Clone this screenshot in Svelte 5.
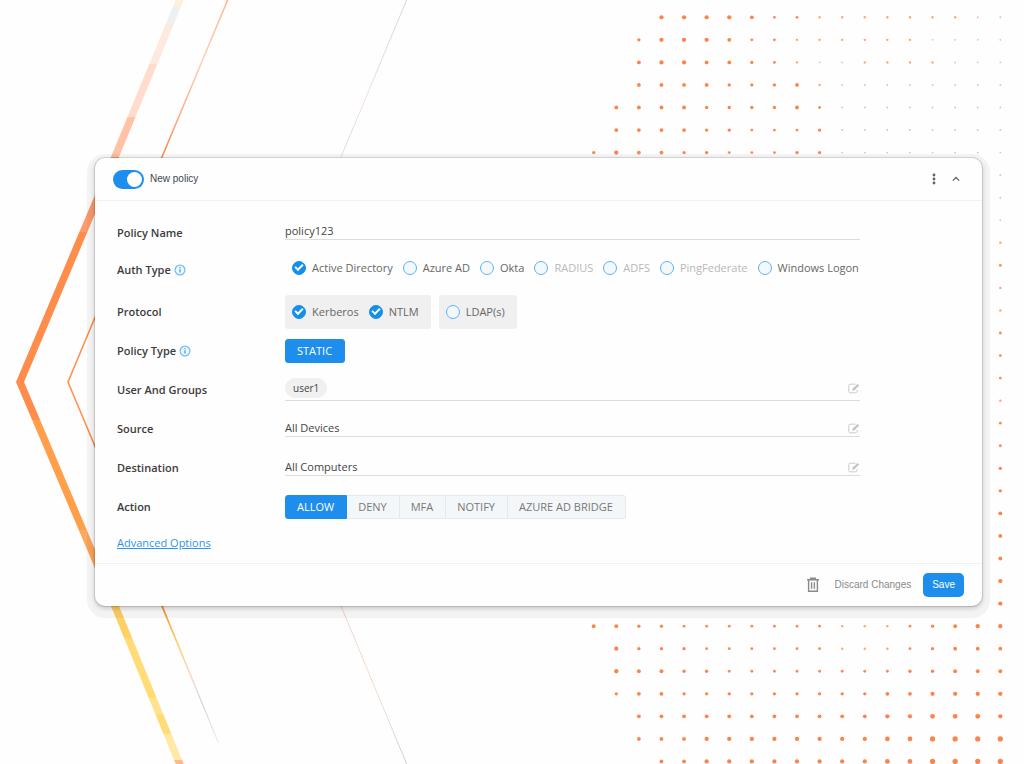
<script lang="ts">
  // One digit per dot, 0 = no dot, 8 = largest
  const topRows = [
    "0006666533222222211",
    "0046665332222221111",
    "0056655432112222111",
    "0055554445211111111",
    "0555544445311111111",
    "0555544333411111111",
    "4655443334411111111",
  ];
  const edgeColumn = "11123223332334455566";
  const bottomRows = [
    "5544333333322234566",
    "0644433333322234555",
    "0655443333333344555",
    "0455444444444556666",
    "0055555555555667776",
    "0055566666666778888",
    "0005566666666778888",
  ];

  const rows = [
    ...topRows,
    ...[...edgeColumn].map((size) => "0".repeat(18) + size),
    ...bottomRows,
  ];

  const dots = rows.flatMap((row, y) =>
    [...row]
      .map((size, x) => ({
        x: 593.7 + x * 22.59,
        y: 17.3 + y * 22.55,
        size: Number(size),
      }))
      .filter((dot) => dot.size > 0),
  );

  const bands = [
    [0, 7, "#ffefdc"],
    [7, 24, "#edeff0"],
    [24, 64, "#fee9de"],
    [64, 117, "#ffdccb"],
    [117, 157, "#ffc2a4"],
    [157, 232, "#ff9c6c"],
    [232, 420, "#ff8c4b"],
    [420, 530, "#ff9f4a"],
    [530, 606, "#ffa75c"],
    [606, 638, "#ffd063"],
    [638, 698, "#ffdc76"],
    [698, 714, "#ffe391"],
    [714, 734, "#ffdc76"],
    [734, 760, "#ffe9a6"],
    [760, 764, "#ffb98d"],
  ] as const;

  let enabled = $state(true);
  let name = $state("policy123");

  let authTypes = $state([
    { label: "Active Directory", checked: true, disabled: false },
    { label: "Azure AD", checked: false, disabled: false },
    { label: "Okta", checked: false, disabled: false },
    { label: "RADIUS", checked: false, disabled: true },
    { label: "ADFS", checked: false, disabled: true },
    { label: "PingFederate", checked: false, disabled: true },
    { label: "Windows Logon", checked: false, disabled: false },
  ]);

  let protocols = $state([
    [
      { label: "Kerberos", checked: true },
      { label: "NTLM", checked: true },
    ],
    [{ label: "LDAP(s)", checked: false }],
  ]);

  const actions = ["ALLOW", "DENY", "MFA", "NOTIFY", "AZURE AD BRIDGE"];
  let action = $state("ALLOW");
</script>

{#snippet info()}
  <svg class="info" viewBox="0 0 12 12" aria-hidden="true">
    <circle cx="6" cy="6" r="4.9" fill="#eef8ff" stroke="#6fbdf5" stroke-width="1.2" />
    <path d="M6 5.2v3.4M6 3v1.3" stroke="#2f9bee" stroke-width="1.2" />
  </svg>
{/snippet}

{#snippet edit(label: string)}
  <button type="button" class="icon edit" aria-label={label}>
    <svg viewBox="0 0 12 11" width="12" height="11" fill="none" stroke="#cbcbcb">
      <path d="M7.5 1.2H2.2Q.8 1.2.8 2.6v5.8q0 1.4 1.4 1.4h5.4q1.4 0 1.4-1.4V7" />
      <path d="M4.2 7.8l.5-2.2L9.6.9l1.7 1.6L6.4 7.3z" fill="#c4c4c4" stroke="none" />
    </svg>
  </button>
{/snippet}

<svg class="backdrop" width="1024" height="764" viewBox="0 0 1024 764" aria-hidden="true">
  <defs>
    <linearGradient id="wide" gradientUnits="userSpaceOnUse" x1="0" y1="0" x2="0" y2="764">
      {#each bands as [from, to, color]}
        <stop offset={from / 764} stop-color={color} />
        <stop offset={to / 764} stop-color={color} />
      {/each}
    </linearGradient>
    <linearGradient id="narrow" gradientUnits="userSpaceOnUse" x1="0" y1="0" x2="0" y2="764">
      <stop offset="0" stop-color="#ffb891" />
      <stop offset="0.08" stop-color="#ffd2bb" />
      <stop offset="0.14" stop-color="#ffb48c" />
      <stop offset="0.2" stop-color="#f98c55" />
      <stop offset="0.5" stop-color="#ff9350" />
      <stop offset="0.8" stop-color="#f59a3c" />
      <stop offset="0.84" stop-color="#ffd060" />
      <stop offset="0.89" stop-color="#f3d8ca" />
      <stop offset="0.92" stop-color="#d4d4d4" />
      <stop offset="0.97" stop-color="#e8e8e8" />
    </linearGradient>
    <linearGradient id="faint" gradientUnits="userSpaceOnUse" x1="0" y1="0" x2="0" y2="764">
      <stop offset="0" stop-color="#d6d6d8" />
      <stop offset="0.08" stop-color="#dcdcdc" />
      <stop offset="0.13" stop-color="#f6dfd6" />
      <stop offset="0.2" stop-color="#dedbda" />
      <stop offset="0.8" stop-color="#f5d3c6" />
      <stop offset="0.92" stop-color="#f3dcd2" />
      <stop offset="1" stop-color="#cfcfcf" />
    </linearGradient>
  </defs>
  <g fill="none">
    <path d="M183-8L115 157 20 382l95 224 68 166" stroke="url(#wide)" stroke-width="7.4" />
    <path d="M231-8L162 157 68 382l94 224" stroke="url(#narrow)" stroke-width="1.6" />
    <path d="M161 606h2L219 743h-1z" fill="url(#narrow)" />
    <path d="M410-8L341 157M341 606l69 166" stroke="url(#faint)" />
  </g>
  <g fill="#fd8448">
    {#each dots as dot}
      <circle
        cx={dot.x}
        cy={dot.y}
        r={0.7 + dot.size * 0.24}
        opacity={Math.min(1, 0.35 + dot.size * 0.2)}
      />
    {/each}
  </g>
</svg>

<main>
  <form class="card" onsubmit={(event) => event.preventDefault()}>
    <header>
      <label class="toggle">
        <input type="checkbox" role="switch" bind:checked={enabled} />
        New policy
      </label>
      <button type="button" class="icon" aria-label="More">
        <svg width="4" height="12" viewBox="0 0 4 12" fill="#606468">
          <circle cx="2" cy="2" r="1.4" />
          <circle cx="2" cy="6" r="1.4" />
          <circle cx="2" cy="10" r="1.4" />
        </svg>
      </button>
      <button type="button" class="icon" aria-label="Collapse">
        <svg width="8" height="6" viewBox="0 0 8 6" fill="none" stroke="#606468" stroke-width="1.3">
          <path d="M.8 4.6L4 1.5l3.2 3.1" />
        </svg>
      </button>
    </header>

    <div class="body">
      <div class="row name">
        <label class="title" for="policy-name">Policy Name</label>
        <div class="field">
          <input id="policy-name" type="text" bind:value={name} />
        </div>
      </div>

      <div class="row auth" role="group" aria-labelledby="auth-title">
        <span class="title" id="auth-title">Auth Type {@render info()}</span>
        <div class="options">
          {#each authTypes as type}
            <label class="option" class:disabled={type.disabled}>
              <input type="checkbox" disabled={type.disabled} bind:checked={type.checked} />
              {type.label}
            </label>
          {/each}
        </div>
      </div>

      <div class="row protocol" role="group" aria-labelledby="protocol-title">
        <span class="title" id="protocol-title">Protocol</span>
        <div class="boxes">
          {#each protocols as group}
            <div class="options box">
              {#each group as protocol}
                <label class="option">
                  <input type="checkbox" bind:checked={protocol.checked} />
                  {protocol.label}
                </label>
              {/each}
            </div>
          {/each}
        </div>
      </div>

      <div class="row">
        <span class="title">Policy Type {@render info()}</span>
        <div class="segments">
          <button type="button" class="active" aria-pressed="true">STATIC</button>
        </div>
      </div>

      <div class="row">
        <span class="title">User And Groups</span>
        <div class="field users">
          <span class="chip">user1</span>
          {@render edit("Edit users and groups")}
        </div>
      </div>

      <div class="row">
        <span class="title">Source</span>
        <div class="field">
          <span>All Devices</span>
          {@render edit("Edit source")}
        </div>
      </div>

      <div class="row">
        <span class="title">Destination</span>
        <div class="field">
          <span>All Computers</span>
          {@render edit("Edit destination")}
        </div>
      </div>

      <div class="row" role="group" aria-labelledby="action-title">
        <span class="title" id="action-title">Action</span>
        <div class="segments">
          {#each actions as item}
            <button
              type="button"
              class:active={action === item}
              aria-pressed={action === item}
              onclick={() => (action = item)}
            >
              {item}
            </button>
          {/each}
        </div>
      </div>

      <div class="advanced">
        <a href="#advanced">Advanced Options</a>
      </div>
    </div>

    <footer>
      <button type="button" class="icon" aria-label="Delete policy">
        <svg width="14" height="16" viewBox="0 0 14 16" fill="none" stroke="#8a8a8a" stroke-width="1.4">
          <path d="M1 2.7h12M4.6 2V1.2h4.8V2M2.6 3v11.2h8.8V3M5.6 5.2v6.6M8.4 5.2v6.6" />
        </svg>
      </button>
      <button type="button" class="discard">Discard Changes</button>
      <button type="submit" class="save">Save</button>
    </footer>
  </form>
</main>

<style>
  :global(body) {
    background: #fefefe;
  }

  .backdrop {
    position: absolute;
    top: 0;
    left: 0;
    z-index: -1;
  }

  main {
    padding: 158px 42px 158px 95px;
    font-family: "Open Sans", "Noto Sans", sans-serif;
    font-size: 11px;
    line-height: 16px;
    color: #444;
  }

  button,
  input {
    font: inherit;
    margin: 0;
    padding: 0;
    border: 0;
    background: none;
  }

  button {
    cursor: pointer;
  }

  .card {
    background: #fefefe;
    border-radius: 10px;
    box-shadow:
      0 0 0 1px rgba(0, 0, 0, 0.1),
      0 2px 5px rgba(0, 0, 0, 0.22),
      0 4px 0 8px rgba(0, 0, 0, 0.045);
  }

  header,
  footer {
    display: flex;
    align-items: center;
    height: 42px;
    padding: 0 18px;
    font-family: "Liberation Sans", Arial, sans-serif;
    font-size: 10px;
  }

  header {
    gap: 16px;
    padding-right: 22px;
    border-bottom: 1px solid #eef1f6;
  }

  .icon {
    display: flex;
  }

  .toggle {
    display: flex;
    align-items: center;
    gap: 6px;
    margin-right: auto;
    color: #40464f;
  }

  .toggle input {
    display: flex;
    box-sizing: border-box;
    appearance: none;
    width: 31px;
    height: 19px;
    padding: 2px;
    border-radius: 10px;
    background: #b8bec5;
  }

  .toggle input::after {
    content: "";
    width: 15px;
    height: 15px;
    border-radius: 50%;
    background: #fff;
  }

  .toggle input:checked {
    justify-content: flex-end;
    background: #1e8eec;
  }

  .body {
    padding: 11px 122px 0 22px;
  }

  .row {
    display: grid;
    grid-template-columns: 168px 1fr;
    align-items: center;
    min-height: 39px;
  }

  .row.name {
    min-height: 41px;
  }

  .row.auth {
    min-height: 33px;
  }

  .row.protocol {
    padding-top: 6px;
  }

  .title {
    display: flex;
    align-items: center;
    gap: 3px;
    font-weight: 600;
    color: #3c3c3c;
  }

  .info {
    width: 12px;
    height: 12px;
  }

  .field {
    display: flex;
    align-items: center;
    align-self: start;
    padding-top: 11px;
    border-bottom: 1px solid #dcdcdc;
  }

  .field input {
    flex: 1;
    height: 16px;
    outline: none;
    color: #444;
  }

  .field.users {
    padding: 8px 0 2px;
  }

  .chip {
    padding: 0 8px;
    border-radius: 10px;
    background: #f0f0f0;
    font-size: 10px;
    line-height: 20px;
  }

  .edit {
    margin-left: auto;
  }

  .options {
    display: flex;
    align-items: center;
    gap: 10px;
    padding-left: 7px;
  }

  .auth .options {
    padding-bottom: 4px;
  }

  .option {
    display: flex;
    align-items: center;
    gap: 6px;
    color: #666;
    white-space: nowrap;
  }

  .option.disabled {
    color: #b8b8b8;
  }

  .option input {
    display: flex;
    align-items: center;
    justify-content: center;
    box-sizing: border-box;
    appearance: none;
    width: 14px;
    height: 14px;
    border: 1px solid #5cb3f5;
    border-radius: 50%;
    background: #f3f8fd;
  }

  .option input:checked {
    border-color: #1490ec;
    background: #1490ec;
  }

  .option input:checked::after {
    content: "";
    width: 6px;
    height: 3px;
    margin-bottom: 2px;
    border: solid #fff;
    border-width: 0 0 2px 2px;
    transform: rotate(-45deg);
  }

  .boxes {
    display: flex;
    gap: 8px;
  }

  .box {
    height: 34px;
    padding-right: 12px;
    border-radius: 3px;
    background: #f0f0f0;
  }

  .segments {
    display: flex;
  }

  .segments button {
    height: 24px;
    padding: 0 12px 0 11px;
    border: 1px solid #e6e9ec;
    border-left-width: 0;
    background: #f4f7fa;
    color: #777;
    white-space: nowrap;
  }

  .segments button:first-child {
    border-left-width: 1px;
    border-radius: 3px 0 0 3px;
  }

  .segments button:last-child {
    border-radius: 0 3px 3px 0;
  }

  .segments button:only-child {
    border-radius: 3px;
  }

  .segments .active {
    border-color: #1e8eec;
    background: #1e8eec;
    color: #fff;
  }

  .advanced {
    height: 28px;
    padding-top: 9px;
  }

  .advanced a {
    color: #2f94e8;
  }

  footer {
    justify-content: flex-end;
    border-top: 1px solid #eef1f6;
  }

  .discard {
    margin: 0 12px 0 14px;
    color: #8a8a8a;
  }

  .save {
    height: 24px;
    padding: 0 9px;
    border-radius: 5px;
    background: #1e8eec;
    color: #fff;
  }
</style>
